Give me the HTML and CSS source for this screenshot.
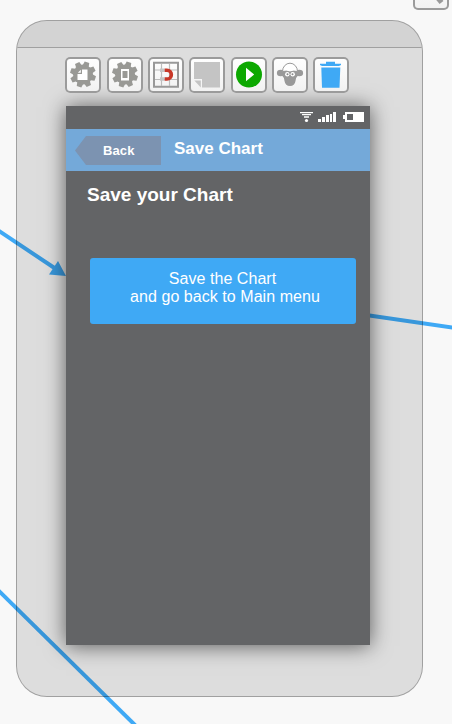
FILE: index.html
```html
<!DOCTYPE html>
<html lang="en">
<head>
<meta charset="utf-8">
<title>Save Chart</title>
<link rel="stylesheet" href="styles.css">
</head>
<body>
<main class="canvas">
  <svg class="links" viewBox="0 0 452 724" aria-hidden="true">
    <g stroke="#3fa9f5" stroke-width="4">
      <path d="M-4 229L56 269"/>
      <path d="M366 315L456 328"/>
      <path d="M-3 589L138 728"/>
    </g>
    <path fill="#3fa9f5" d="M66 276L58 261L49 274.500Z"/>
  </svg>
  <button class="tool corner-tool" aria-label="Search"><svg viewBox="0 0 36 36"><path d="M20 18l8.500 10.500" stroke="#999" stroke-width="5"/></svg></button>

  <section class="frame">
    <div class="frame-bar"></div>
    <nav class="tools">
      <button class="tool" aria-label="Settings">
        <svg viewBox="0 0 36 36">
          <defs>
            <g id="gear" fill="#999995">
              <circle cx="18" cy="17.500" r="10"/>
              <g transform="rotate(18 18 17.500)">
                <path id="tooth" d="M15.600 4.600h4.800l.7 4h-6.200z"/>
                <use href="#tooth" transform="rotate(45 18 17.500)"/>
                <use href="#tooth" transform="rotate(90 18 17.500)"/>
                <use href="#tooth" transform="rotate(135 18 17.500)"/>
                <use href="#tooth" transform="rotate(180 18 17.500)"/>
                <use href="#tooth" transform="rotate(225 18 17.500)"/>
                <use href="#tooth" transform="rotate(270 18 17.500)"/>
                <use href="#tooth" transform="rotate(315 18 17.500)"/>
              </g>
            </g>
          </defs>
          <use href="#gear"/>
          <path fill="#fff" d="M17 12.500h5.500v10.500h-10v-6H17z"/><path fill="#fff" d="M15.800 12.800v3h-3z"/>
        </svg>
      </button>
      <button class="tool" aria-label="Screen settings">
        <svg viewBox="0 0 36 36"><use href="#gear"/><path fill="#fff" d="M14 12h8v11.500h-8z"/><path fill="#999995" d="M15.500 14h5v7h-5z"/></svg>
      </button>
      <button class="tool" aria-label="Snap to grid">
        <svg viewBox="0 0 36 36" fill="none">
          <path d="M6 5.700h24v24H6z" stroke="#999" stroke-width="2"/>
          <path d="M13.500 7v22M21.500 7v22M7 13h22M7 22.500h22" stroke="#bcbcbc" stroke-width="1.200"/>
          <path d="M12 13.300h4.700M12 22h4.700" stroke="#c4c4c4" stroke-width="3.500"/>
          <path d="M16.700 13.300H19a4.350 4.350 0 0 1 0 8.700H16.700" stroke="#c83728" stroke-width="3.600"/>
        </svg>
      </button>
      <button class="tool" aria-label="Note">
        <svg viewBox="0 0 36 36"><path fill="#c4c4c4" d="M5 5h26v25.500H13V22H5z"/><path fill="#c4c4c4" d="M5.300 23.500h6.500v7z"/></svg>
      </button>
      <button class="tool" aria-label="Play">
        <svg viewBox="0 0 36 36"><circle cx="18" cy="17.500" r="13" fill="#0ca800"/><path fill="#fff" d="M15 10.800v13.400l8.200-6.700z"/></svg>
      </button>
      <button class="tool" aria-label="Monkey">
        <svg viewBox="0 0 36 36">
          <g fill="#999"><ellipse cx="8.600" cy="16" rx="3.700" ry="3.300"/><ellipse cx="27.400" cy="16" rx="3.700" ry="3.300"/>
          <path d="M10 13.500h16v5q-2 1.500-2.500 5.500-.8 5-5.500 5t-5.500-5q-.5-4-2.500-5.500z"/></g>
          <path d="M10.500 14.500a7.500 8.300 0 0 1 15 0q-4-1-7.500.5-3.500-1.500-7.500-.5z" fill="#fff" stroke="#999"/>
          <circle cx="15.300" cy="17.300" r="2.200" fill="#fff"/><circle cx="20.700" cy="17.300" r="2.200" fill="#fff"/>
          <circle cx="15.500" cy="17.300" r="1" fill="#888"/><circle cx="20.500" cy="17.300" r="1" fill="#888"/>
        </svg>
      </button>
      <button class="tool" aria-label="Delete">
        <svg viewBox="0 0 36 36" fill="#3fa9f5"><path d="M13 4.800h9v2h6V8l-2 1H9L7 8V6.800h6z"/><path d="M8.300 10.500h19L26.500 30.700H9z"/></svg>
      </button>
    </nav>

    <article class="screen">
      <div class="status">
        <svg class="wifi" viewBox="0 0 13 11" fill="#fff"><path d="M0 0h13v1.200H0zM2 2h9v1.300H2zM4 4.200h5v1.500H4z"/><circle cx="6.500" cy="8.500" r="1.600"/></svg>
        <svg class="signal" viewBox="0 0 18 10" fill="#fff"><path d="M0 7h3v3H0zM4 5h3v5H4zM8 3h3v7H8zM12 2h2v8h-2zM15 0h3v10h-3z"/></svg>
        <svg class="battery" viewBox="0 0 21 10" fill="#fff"><path fill-rule="evenodd" d="M2 0h19v10H2V7H0V3h2zM4 2v6h6V2z"/></svg>
      </div>
      <header class="navbar">
        <a class="back">Back</a>
        <h1 class="title">Save Chart</h1>
      </header>
      <h2 class="heading">Save your Chart</h2>
      <button class="save"><span class="save-lead">Save the Chart</span><br>and go back to Main menu</button>
    </article>
  </section>
</main>
</body>
</html>
```
FILE: styles.css
```css
* { box-sizing: border-box; }
body { margin: 0; font-family: "Liberation Sans", Arial, sans-serif; }
button { font: inherit; border: 0; padding: 0; }
svg { display: block; }
h1, h2 { margin: 0; }

.canvas {
  position: relative;
  width: 452px;
  height: 724px;
  overflow: hidden;
  background: #f8f8f8;
}
.links { position: absolute; inset: 0; width: 452px; height: 724px; }

.frame {
  position: absolute;
  left: 16px;
  top: 20px;
  width: 407px;
  height: 677px;
  border: 1px solid rgba(0, 0, 0, .28);
  border-radius: 31px;
  background: rgba(0, 0, 0, .105);
  overflow: hidden;
}
.frame-bar {
  height: 27px;
  border-bottom: 1px solid #a0a0a0;
  background: rgba(0, 0, 0, .045);
}

.tools {
  display: flex;
  gap: 5px;
  margin: 9px 0 0 48px;
}
.tool {
  width: 36px;
  height: 36px;
  border-radius: 5px;
  background: linear-gradient(#fff, #f1f1f1);
  box-shadow: inset 0 0 0 2px #9b9b9b;
}
.tool:nth-child(3n + 2) { margin-left: 1px; }
.tool svg { width: 36px; height: 36px; }
.tool.corner-tool { position: absolute; left: 413px; top: -26px; margin: 0; }

/* the last 3n + 2 item is the fifth; the bar ends at x = 349 */
.screen {
  width: 304px;
  height: 539px;
  margin: 13px 0 0 49px;
  background: #636466;
  box-shadow: 0 1px 20px rgba(0, 0, 0, .6);
  color: #fff;
}
.status {
  display: flex;
  justify-content: flex-end;
  height: 23px;
  padding: 6px 6px 0 0;
}
.wifi { width: 13px; height: 11px; }
.signal { width: 18px; height: 10px; margin-left: 5px; }
.battery { width: 21px; height: 10px; margin-left: 7px; }

.navbar { display: flex; height: 42px; padding: 7px 0 0 9px; background: #74a9d9; }
.back {
  width: 86px;
  height: 29px;
  padding-left: 28px;
  background: #7c93b1;
  clip-path: polygon(11px 0, 100% 0, 100% 100%, 11px 100%, 0 50%);
  font-size: 13px;
  font-weight: bold;
  line-height: 29px;
  letter-spacing: .1px;
}
.title { margin-left: 13px; font-size: 17px; line-height: 26px; }
.heading { margin: 12px 0 0 21px; font-size: 19px; line-height: 24px; }
.save {
  display: block;
  width: 266px;
  height: 66px;
  margin: 51px 0 0 24px;
  padding: 0 0 6px 4px;
  border-radius: 3px;
  background: #3fa9f5;
  color: #fff;
  font-size: 16px;
  line-height: 18px;
  letter-spacing: .05px;
}
.save-lead { padding-right: 5px; }
```
